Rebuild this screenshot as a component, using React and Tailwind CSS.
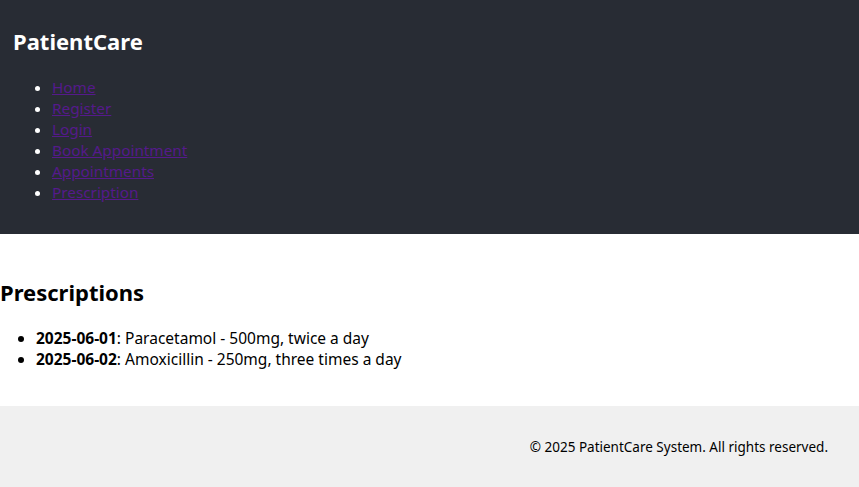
const links = ['Home', 'Register', 'Login', 'Book Appointment', 'Appointments', 'Prescription'];

const prescriptions = [
  { date: '2025-06-01', text: 'Paracetamol - 500mg, twice a day' },
  { date: '2025-06-02', text: 'Amoxicillin - 250mg, three times a day' },
];

export default function App() {
  return (
    <div className="min-h-[487px] bg-white font-['Noto_Sans',sans-serif] text-black">
      <header className="bg-[#282c34] px-[13px] pt-[25px] pb-[31px] text-white">
        <h1 className="text-[22px] font-bold leading-[32px]">PatientCare</h1>
        <nav>
          <ul className="mt-[20px] list-disc pl-[39px] text-[15.3px] leading-[21px] marker:text-white">
            {links.map((l) => (
              <li key={l}>
                <a href="#" className="text-[#551a8b] underline">{l}</a>
              </li>
            ))}
          </ul>
        </nav>
      </header>

      <main className="pt-[42px] pb-[36px]">
        <h2 className="text-[22px] font-bold leading-[32px]">Prescriptions</h2>
        <ul className="mt-[20px] list-disc pl-[36px] text-[15.5px] leading-[21px]">
          {prescriptions.map((p) => (
            <li key={p.date}>
              <strong className="font-bold">{p.date}</strong>: {p.text}
            </li>
          ))}
        </ul>
      </main>

      <footer className="bg-[#f0f0f0] pt-[32px] pb-[31px] pr-[31px] text-right text-[13.5px] leading-[19px]">
        <p>© 2025 PatientCare System. All rights reserved.</p>
      </footer>
    </div>
  );
}
